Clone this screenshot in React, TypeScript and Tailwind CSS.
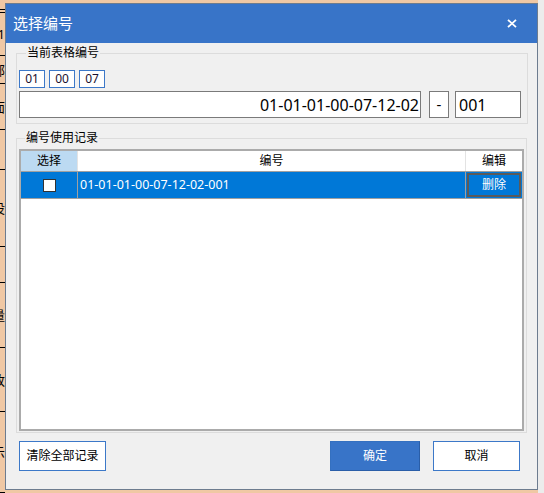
import React from "react";

const FONT = '"Noto Sans", "Noto Sans CJK SC", sans-serif';

// cells of the worksheet column visible at the left of the dialog
const leftCells: { h: number; t: string }[] = [
  { h: 10, t: "" },
  { h: 3, t: "" },
  { h: 43, t: "1" },
  { h: 28, t: "部" },
  { h: 46, t: "面" },
  { h: 40, t: "" },
  { h: 77, t: "设" },
  { h: 36, t: "" },
  { h: 65, t: "量" },
  { h: 64, t: "改" },
  { h: 81, t: "示" },
];

function SheetBackdrop() {
  return (
    <div className="w-[544px] h-[493px] flex flex-col bg-[#f0c8a4] text-[13px] leading-[14px] text-black">
      <div className="h-[3px] flex">
        <div className="w-[60px] bg-[#f0c8a4]" />
        <div className="flex-1 bg-[#e2e2e2]" />
      </div>
      <div className="flex-1 flex">
        <div className="w-[5px] flex flex-col overflow-hidden">
          {leftCells.map((c, i) => (
            <div
              key={i}
              className="shrink-0 border-b border-black overflow-hidden flex justify-end items-center"
              style={{ height: c.h }}
            >
              <span className="whitespace-nowrap shrink-0">{c.t}</span>
            </div>
          ))}
        </div>
        <div className="flex-1" />
        <div className="w-[6px] bg-[#ececec]" />
      </div>
      <div className="h-[4px] flex overflow-hidden">
        <div className="w-[135px] border-r border-black pl-[20px] overflow-hidden whitespace-nowrap">非在执行业务</div>
        <div className="w-[32px] border-r border-black" />
        <div className="w-[300px] border-r-2 border-black" />
        <div className="flex-1" />
      </div>
    </div>
  );
}

function CloseGlyph() {
  return (
    <svg width="10" height="9" viewBox="0 0 10 9" fill="none">
      <path d="M1 0.8 L9 8.2 M9 0.8 L1 8.2" stroke="white" strokeWidth="1.8" />
    </svg>
  );
}

function CodeChip({ value }: { value: string }) {
  return (
    <div className="w-[26px] h-[18px] border border-[#3c78c8] bg-white flex items-center justify-center text-[12px] leading-none text-[#1b1030]">
      {value}
    </div>
  );
}

export default function App() {
  return (
    <div className="relative w-[544px] h-[493px] overflow-hidden" style={{ fontFamily: FONT }}>
      <SheetBackdrop />

      {/* modal window over the worksheet */}
      <div className="absolute left-[5px] top-[3px] w-[533px] h-[487px] border border-[#6d7c8f] bg-[#f0f0f0] flex flex-col">
        {/* title bar */}
        <div className="h-[39px] bg-[#3874c8] flex items-center justify-between pl-[7px] pr-[20px]">
          <span className="text-[15px] leading-none text-white">选择编号</span>
          <CloseGlyph />
        </div>

        {/* current sheet number */}
        <fieldset className="mt-[3px] mx-[10px] w-[511px] border border-[#dcdcdc] pl-[2px] pr-[6px] pb-[5px]">
          <legend className="ml-[7px] px-[1px] text-[12px] leading-[14px] text-black">当前表格编号</legend>
          <div className="mt-[10px] flex gap-[4px]">
            <CodeChip value="01" />
            <CodeChip value="00" />
            <CodeChip value="07" />
          </div>
          <div className="mt-[3px] flex items-center">
            <div className="w-[402px] h-[27px] border border-[#7a7a7a] bg-white flex items-center justify-end pr-[1px] text-[16px] leading-none text-black">
              01-01-01-00-07-12-02
            </div>
            <div className="ml-[8px] w-[20px] h-[27px] border border-[#7a7a7a] bg-white flex items-center justify-center text-[15px] leading-none text-black">
              -
            </div>
            <div className="ml-[6px] w-[66px] h-[27px] border border-[#7a7a7a] bg-white flex items-center pl-[3px] text-[16px] leading-none text-black">
              001
            </div>
          </div>
        </fieldset>

        {/* usage history */}
        <fieldset className="mt-[7px] mx-[10px] w-[511px] border border-[#dcdcdc] pl-[2px] pr-[2px] pb-[1px]">
          <legend className="ml-[6px] px-[1px] text-[12px] leading-[14px] text-black">编号使用记录</legend>
          <div className="mt-[4px] w-[505px] h-[282px] border-2 border-[#ababab] bg-white flex flex-col">
            <div className="h-[21px] flex border-b border-[#a0a0a0] text-[12px] leading-none text-black">
              <div className="w-[56px] bg-[#bcdaf2] flex items-center justify-center">选择</div>
              <div className="flex-1 border-l border-[#e3e3e3] flex items-center justify-center">编号</div>
              <div className="w-[57px] border-l border-[#e3e3e3] flex items-center justify-center">编辑</div>
            </div>
            <div className="h-[27px] flex bg-[#0078d7] border-b border-[#a0a0a0] text-[12.5px] leading-none text-white">
              <div className="w-[56px] flex items-center justify-center">
                <div className="w-[13px] h-[13px] bg-white border border-[#333333]" />
              </div>
              <div className="flex-1 border-l border-[#a0a0a0] flex items-center pl-[2px]">
                01-01-01-00-07-12-02-001
              </div>
              <div className="w-[57px] border-l border-[#a0a0a0] p-[1px] flex">
                <div className="flex-1 border-2 border-[#5a5a5a] flex items-center justify-center text-[12px]">删除</div>
              </div>
            </div>
          </div>
        </fieldset>

        {/* actions */}
        <div className="mt-[8px] flex pl-[13px] pr-[17px]">
          <button className="w-[87px] h-[30px] border border-[#3c78c8] bg-white text-[12px] leading-none text-black">
            清除全部记录
          </button>
          <button className="ml-auto w-[90px] h-[30px] border border-[#3470c0] border-b-[#2a5ea8] border-r-[#2a5ea8] bg-[#3874c8] text-[12px] leading-none text-white">
            确定
          </button>
          <button className="ml-[13px] w-[87px] h-[30px] border border-[#3c78c8] bg-white text-[12px] leading-none text-black">
            取消
          </button>
        </div>
      </div>
    </div>
  );
}
